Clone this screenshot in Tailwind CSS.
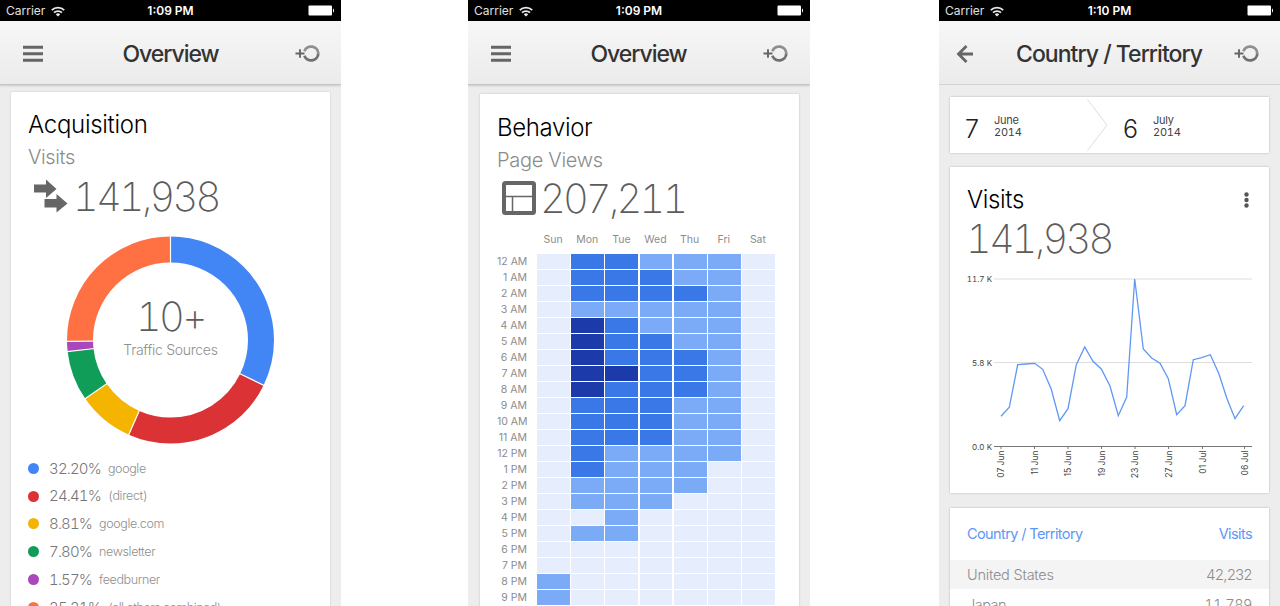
<!DOCTYPE html>
<html lang="en">
<head>
  <meta charset="UTF-8">
  <meta name="viewport" content="width=device-width, initial-scale=1.0">
  <title>Analytics - Mobile Screens</title>
  <script src="https://cdn.jsdelivr.net/npm/@tailwindcss/browser@4"></script>
</head>
<body class="h-[606px] overflow-hidden bg-white font-['Inter','Liberation_Sans',sans-serif] font-light">

  <!-- shared icons -->
  <svg class="hidden">
    <symbol id="wifi" viewBox="0 0 14 11">
      <g fill="none" stroke="#e8e8e8" stroke-width="1.8">
        <path d="M0.8 4.200a8.800 8.800 0 0 1 12.400 0"/>
        <path d="M3 6.700a5.700 5.700 0 0 1 8 0"/>
      </g>
      <path d="M7 10.500 4.800 8.400a3.100 3.100 0 0 1 4.400 0z" fill="#e8e8e8"/>
    </symbol>
    <symbol id="battery" viewBox="0 0 27 11">
      <rect x="0.5" y="0.5" width="23.5" height="10" rx="1" fill="#fff"/>
      <path d="M25 3.500c1.300.4 1.300 3.600 0 4z" fill="#fff"/>
    </symbol>
    <symbol id="menu" viewBox="0 0 20 18">
      <path d="M0 2.200h20M0 8.700h20M0 15.200h20" stroke="#666" stroke-width="3"/>
    </symbol>
    <symbol id="add" viewBox="0 0 26 20">
      <path d="M9.400 7.200A7.200 7.200 0 0 1 23.300 9.500" fill="none" stroke="#8f8f8f" stroke-width="2.800"/>
      <path d="M23.300 9.500A7.200 7.200 0 0 1 9.400 11.800" fill="none" stroke="#707070" stroke-width="2.800"/>
      <path d="M0.500 9.500h9M5 5.200v8.600" stroke="#666" stroke-width="1.900"/>
    </symbol>
  </svg>

  <main class="flex">

    <!-- Acquisition -->
    <section class="h-[606px] w-[341px] shrink-0 overflow-hidden bg-[#ededed]">
      <div class="grid h-[21px] grid-cols-3 items-center bg-black pr-[6px] pl-[6px] text-[#e0e0e0]">
        <div class="flex items-center gap-[6px] pt-px text-[12px] font-normal">Carrier <svg class="h-[11px] w-[14px]"><use href="#wifi"/></svg></div>
        <div class="pt-px text-center text-[12px] font-semibold text-white">1:09 PM</div>
        <svg class="h-[11px] w-[27px] justify-self-end"><use href="#battery"/></svg>
      </div>
      <header class="relative flex h-[64px] items-center justify-between border-b border-[#c4c4c4] bg-linear-to-b from-[#f7f7f7] to-[#ebebeb] pt-[2px] pr-[20px] pl-[23px] shadow-[0_1px_2px_rgba(0,0,0,0.15)]">
        <svg class="h-[18px] w-[20px]"><use href="#menu"/></svg>
        <h1 class="pt-px pl-[3px] text-[23px] font-medium tracking-[-0.045em] text-[#333]">Overview</h1>
        <svg class="h-[20px] w-[26px]"><use href="#add"/></svg>
      </header>
      <div class="mx-[11px] mt-[7px] h-[520px] rounded-t-[1px] bg-white px-[17px] pt-[17px] shadow-[0_0_2px_rgba(0,0,0,0.2)]">
        <h2 class="text-[24px] leading-[32px] tracking-[-0.012em] text-black">Acquisition</h2>
        <p class="text-[20px] leading-[32px] tracking-[-0.02em] text-[#8c8c8c]">Visits</p>
        <div class="-mt-px flex h-[48px] items-center pl-[6px] text-[40px] tracking-[-0.073em] text-[#5c5c5c] tabular-nums">
          <svg class="h-[34px] w-[34px]" viewBox="0 0 34 34" fill="#666">
            <path d="M0 5.500h12V0.500L22.500 10 12 19V13.500H0z"/>
            <path d="M10.500 20h12V15L33.500 24.500 22.500 33.500V28.500H10.500z"/>
          </svg>
          <span class="ml-[5px] pt-px font-extralight">141,938</span>
        </div>
        <div class="relative mx-auto mt-[16px] h-[208px] w-[208px]">
          <svg class="h-full w-full" viewBox="-103.500 -104 208 208">
            <g fill="none" stroke-width="26" transform="rotate(-90)">
              <circle r="90.500" stroke="#4285f4" pathLength="100" stroke-dasharray="32.200 100"/>
              <circle r="90.500" stroke="#db3236" pathLength="100" stroke-dasharray="24.410 100" stroke-dashoffset="-32.200"/>
              <circle r="90.500" stroke="#f4b400" pathLength="100" stroke-dasharray="8.810 100" stroke-dashoffset="-56.610"/>
              <circle r="90.500" stroke="#0f9d58" pathLength="100" stroke-dasharray="7.800 100" stroke-dashoffset="-65.420"/>
              <circle r="90.500" stroke="#ab47bc" pathLength="100" stroke-dasharray="1.570 100" stroke-dashoffset="-73.220"/>
              <circle r="90.500" stroke="#ff7043" pathLength="100" stroke-dasharray="25.210 100" stroke-dashoffset="-74.790"/>
            </g>
            <g stroke="#fff" stroke-width="1.200">
              <path d="M0-76V-105"/>
              <path d="M0-76V-105" transform="rotate(115.900)"/>
              <path d="M0-76V-105" transform="rotate(203.800)"/>
              <path d="M0-76V-105" transform="rotate(235.500)"/>
              <path d="M0-76V-105" transform="rotate(263.600)"/>
              <path d="M0-76V-105" transform="rotate(269.200)"/>
            </g>
          </svg>
          <div class="absolute inset-0 flex flex-col items-center pt-[57px]">
            <span class="text-[40px] leading-[48px] font-extralight tracking-[-0.073em] text-[#5c5c5c] tabular-nums">10+</span>
            <span class="text-[14px] leading-[18px] tracking-[-0.02em] text-[#8f8f8f]">Traffic Sources</span>
          </div>
        </div>
        <ul class="mt-[11px] text-[15px] tracking-[-0.055em] text-[#777] tabular-nums">
          <li class="flex h-[27.800px] items-center"><i class="-mt-px mr-[10px] h-[11px] w-[11px] rounded-full bg-[#4285f4]"></i>32.20%<span class="ml-[7px] text-[12.500px] tracking-[-0.03em] text-[#909090]">google</span></li>
          <li class="flex h-[27.800px] items-center"><i class="-mt-px mr-[10px] h-[11px] w-[11px] rounded-full bg-[#db3236]"></i>24.41%<span class="ml-[7px] text-[12.500px] tracking-[-0.03em] text-[#909090]">(direct)</span></li>
          <li class="flex h-[27.800px] items-center"><i class="-mt-px mr-[10px] h-[11px] w-[11px] rounded-full bg-[#f4b400]"></i>8.81%<span class="ml-[7px] text-[12.500px] tracking-[-0.03em] text-[#909090]">google.com</span></li>
          <li class="flex h-[27.800px] items-center"><i class="-mt-px mr-[10px] h-[11px] w-[11px] rounded-full bg-[#0f9d58]"></i>7.80%<span class="ml-[7px] text-[12.500px] tracking-[-0.03em] text-[#909090]">newsletter</span></li>
          <li class="flex h-[27.800px] items-center"><i class="-mt-px mr-[10px] h-[11px] w-[11px] rounded-full bg-[#ab47bc]"></i>1.57%<span class="ml-[7px] text-[12.500px] tracking-[-0.03em] text-[#909090]">feedburner</span></li>
          <li class="flex h-[27.800px] items-center"><i class="-mt-px mr-[10px] h-[11px] w-[11px] rounded-full bg-[#ff7043]"></i>25.21%<span class="ml-[7px] text-[12.500px] tracking-[-0.04em] text-[#909090]">(all others combined)</span></li>
        </ul>
      </div>
    </section>

    <!-- Behavior -->
    <section class="ml-[127px] h-[606px] w-[342px] shrink-0 overflow-hidden bg-[#ededed]">
      <div class="grid h-[21px] grid-cols-3 items-center bg-black pr-[6px] pl-[6px] text-[#e0e0e0]">
        <div class="flex items-center gap-[6px] pt-px text-[12px] font-normal">Carrier <svg class="h-[11px] w-[14px]"><use href="#wifi"/></svg></div>
        <div class="pt-px text-center text-[12px] font-semibold text-white">1:09 PM</div>
        <svg class="h-[11px] w-[27px] justify-self-end"><use href="#battery"/></svg>
      </div>
      <header class="relative flex h-[64px] items-center justify-between border-b border-[#c4c4c4] bg-linear-to-b from-[#f7f7f7] to-[#ebebeb] pt-[2px] pr-[21px] pl-[23px] shadow-[0_1px_2px_rgba(0,0,0,0.15)]">
        <svg class="h-[18px] w-[20px]"><use href="#menu"/></svg>
        <h1 class="pt-px pl-[3px] text-[23px] font-medium tracking-[-0.045em] text-[#333]">Overview</h1>
        <svg class="h-[20px] w-[26px]"><use href="#add"/></svg>
      </header>
      <div class="mr-[11px] ml-[12px] mt-[9px] h-[520px] bg-white pt-[18px] pl-[17px] shadow-[0_0_2px_rgba(0,0,0,0.2)]">
        <h2 class="text-[24px] leading-[32px] tracking-[-0.015em] text-black">Behavior</h2>
        <p class="text-[20px] leading-[32px] tracking-[-0.015em] text-[#8c8c8c]">Page Views</p>
        <div class="-mt-px flex h-[48px] items-center pl-[5px] text-[40px] tracking-[-0.073em] text-[#5c5c5c] tabular-nums">
          <svg class="-mt-[2px] h-[34px] w-[34px]" viewBox="0 0 34 34" fill="none" stroke="#666">
            <rect x="2" y="2" width="30" height="30" rx="1.500" stroke-width="4"/>
            <path d="M3 15.500h28M10.500 15.500V31" stroke-width="1.500"/>
          </svg>
          <span class="ml-[4px] font-extralight">207,211</span>
        </div>
        <div id="days" class="ml-[39px] mt-[9px] grid w-[239px] grid-cols-7 text-center text-[10.500px] leading-[16px] font-normal text-[#8c8c8c]"></div>
        <div id="heatmap" class="mt-[6px]"></div>
      </div>
    </section>

    <!-- Country / Territory -->
    <section class="ml-[129px] h-[606px] w-[341px] shrink-0 overflow-hidden bg-[#ededed]">
      <div class="grid h-[21px] grid-cols-3 items-center bg-black pr-[6px] pl-[6px] text-[#e0e0e0]">
        <div class="flex items-center gap-[6px] pt-px text-[12px] font-normal">Carrier <svg class="h-[11px] w-[14px]"><use href="#wifi"/></svg></div>
        <div class="pt-px text-center text-[12px] font-semibold text-white">1:10 PM</div>
        <svg class="h-[11px] w-[27px] justify-self-end"><use href="#battery"/></svg>
      </div>
      <header class="relative flex h-[64px] items-center justify-between border-b border-[#d4d4d4] bg-linear-to-b from-[#f7f7f7] to-[#ebebeb] pt-[2px] pr-[20px] pl-[17px]">
        <svg class="h-[18px] w-[18px]" viewBox="0 0 18 18" fill="none" stroke="#666" stroke-width="2.800">
          <path d="M17 9H2.500M10.500 1 2.500 9l8 8"/>
        </svg>
        <h1 class="pt-px pl-[10px] text-[23px] font-medium tracking-[-0.042em] text-[#333]">Country / Territory</h1>
        <svg class="h-[20px] w-[26px]"><use href="#add"/></svg>
      </header>
      <div class="mx-[11px] mt-[12px] flex h-[56px] items-center bg-white shadow-[0_0_2px_rgba(0,0,0,0.25)]">
        <div class="flex w-[137px] items-center pl-[15px]">
          <span class="w-[29px] pt-[7px] text-[25px] leading-[30px] text-[#222]">7</span>
          <span class="pt-[2px] text-[11px] leading-[12.500px] font-normal tracking-[-0.02em] text-[#444] tabular-nums">June<br>2014</span>
        </div>
        <svg class="h-[52px] w-[21px]" viewBox="0 0 21 52" fill="none" stroke="#dedede"><path d="M0.500 0.500 20 26 0.500 51.500"/></svg>
        <div class="flex items-center pl-[15px]">
          <span class="w-[30px] pt-[7px] text-[25px] leading-[30px] text-[#222]">6</span>
          <span class="pt-[2px] text-[11px] leading-[12.500px] font-normal tracking-[-0.02em] text-[#444] tabular-nums">July<br>2014</span>
        </div>
      </div>
      <div class="mx-[11px] mt-[14px] h-[326px] bg-white pt-[17px] shadow-[0_0_2px_rgba(0,0,0,0.25)]">
        <div class="flex items-center justify-between pr-[20px] pl-[17px]">
          <h2 class="text-[24px] leading-[32px] tracking-[-0.015em] text-black">Visits</h2>
          <svg class="h-[16px] w-[5px]" viewBox="0 0 5 16" fill="#555"><circle cx="2.500" cy="2.500" r="2.200"/><circle cx="2.500" cy="8" r="2.200"/><circle cx="2.500" cy="13.500" r="2.200"/></svg>
        </div>
        <p class="-mt-px pl-[16px] text-[40px] leading-[48px] font-extralight tracking-[-0.073em] text-[#5c5c5c] tabular-nums">141,938</p>
        <svg class="mt-[5px] h-[225px] w-[319px]" viewBox="0 0 319 225">
          <path d="M44 11H302M44 94.500H302" stroke="#ddd"/>
          <path d="M44 178.500H302" stroke="#777"/>
          <path id="ticks" stroke="#777"/>
          <g class="font-normal tabular-nums" font-size="8" fill="#444" text-anchor="end">
            <text x="42" y="14">11.7 K</text>
            <text x="42" y="97.500">5.8 K</text>
            <text x="42" y="181.500">0.0 K</text>
          </g>
          <g id="dates" class="font-normal" font-size="8.500" fill="#444" text-anchor="end"></g>
          <polyline fill="none" stroke="#5e97f6" stroke-width="1.300" points="51,148.300 59.300,139.300 67.700,96.700 76,96 84.700,95.300 92.700,101.300 101.300,121.300 109.700,152.700 118,140.700 126.300,96.700 134.700,79 143,93.300 151.300,101 160,118 168.300,147.700 176.700,129 184.700,11 193.300,81 201.700,90 210,95.300 218.300,110.700 226.700,146.700 235,137.700 243.300,91.700 251.700,89.700 260.300,86.700 268.700,105.300 277,130.700 285,150.700 293.700,137.700"/>
        </svg>
      </div>
      <div class="mx-[11px] mt-[15px] h-[140px] bg-white text-[14.500px] tracking-[-0.035em] text-[#8c8c8c] shadow-[0_0_2px_rgba(0,0,0,0.25)]">
        <div class="flex h-[52px] items-center justify-between px-[17px] font-normal tracking-[-0.042em] text-[#5e97f6]"><span>Country / Territory</span><span>Visits</span></div>
        <div class="flex h-[29px] items-center justify-between bg-[#f4f4f4] px-[17px] pt-px"><span class="tracking-[-0.015em]">United States</span><span>42,232</span></div>
        <div class="flex h-[29px] items-center justify-between px-[17px] pt-[2px] tabular-nums"><span>Japan</span><span>11,789</span></div>
      </div>
    </section>
  </main>

  <script>
    const shades = ["bg-[#e6eefd]", "bg-[#7baaf7]", "bg-[#3b78e7]", "bg-[#1c3aa9]"];
    // one row per hour, one digit per day (Sun..Sat)
    const hours = [
      "0221110", "0222110", "0222210", "0111110", "0321110", "0322110",
      "0322210", "0332210", "0322210", "0222110", "0222110", "0222110",
      "0211110", "0211100", "0111100", "0111000", "0010000", "0110000",
      "0000000", "0000000", "1000000", "1000000", "0000000", "0000000"
    ];

    document.getElementById("days").innerHTML = ["Sun", "Mon", "Tue", "Wed", "Thu", "Fri", "Sat"]
      .map(day => `<span>${day}</span>`).join("");

    document.getElementById("heatmap").innerHTML = hours.map((row, hour) => {
      const label = (hour % 12 || 12) + (hour < 12 ? " AM" : " PM");
      const cells = [...row].map(level => `<div class="${shades[level]}"></div>`).join("");
      return `<div class="flex h-[16px] pb-[1px]">
        <span class="mr-[10px] w-[30px] text-right text-[10.500px] leading-[15px] font-normal whitespace-nowrap text-[#8c8c8c]">${label}</span>
        <div class="grid w-[238px] grid-cols-7 gap-x-[1.200px]">${cells}</div>
      </div>`;
    }).join("");

    const dates = { "07 Jun": 51, "11 Jun": 84.5, "15 Jun": 118, "19 Jun": 151.5, "23 Jun": 185, "27 Jun": 218.5, "01 Jul": 252.5, "06 Jul": 294.5 };
    document.getElementById("ticks").setAttribute("d", Object.values(dates).map(x => `M${x} 178v3`).join(""));
    document.getElementById("dates").innerHTML = Object.entries(dates)
      .map(([date, x]) => `<text transform="translate(${x + 3} 182.500) rotate(-90)">${date}</text>`).join("");
  </script>
</body>
</html>
